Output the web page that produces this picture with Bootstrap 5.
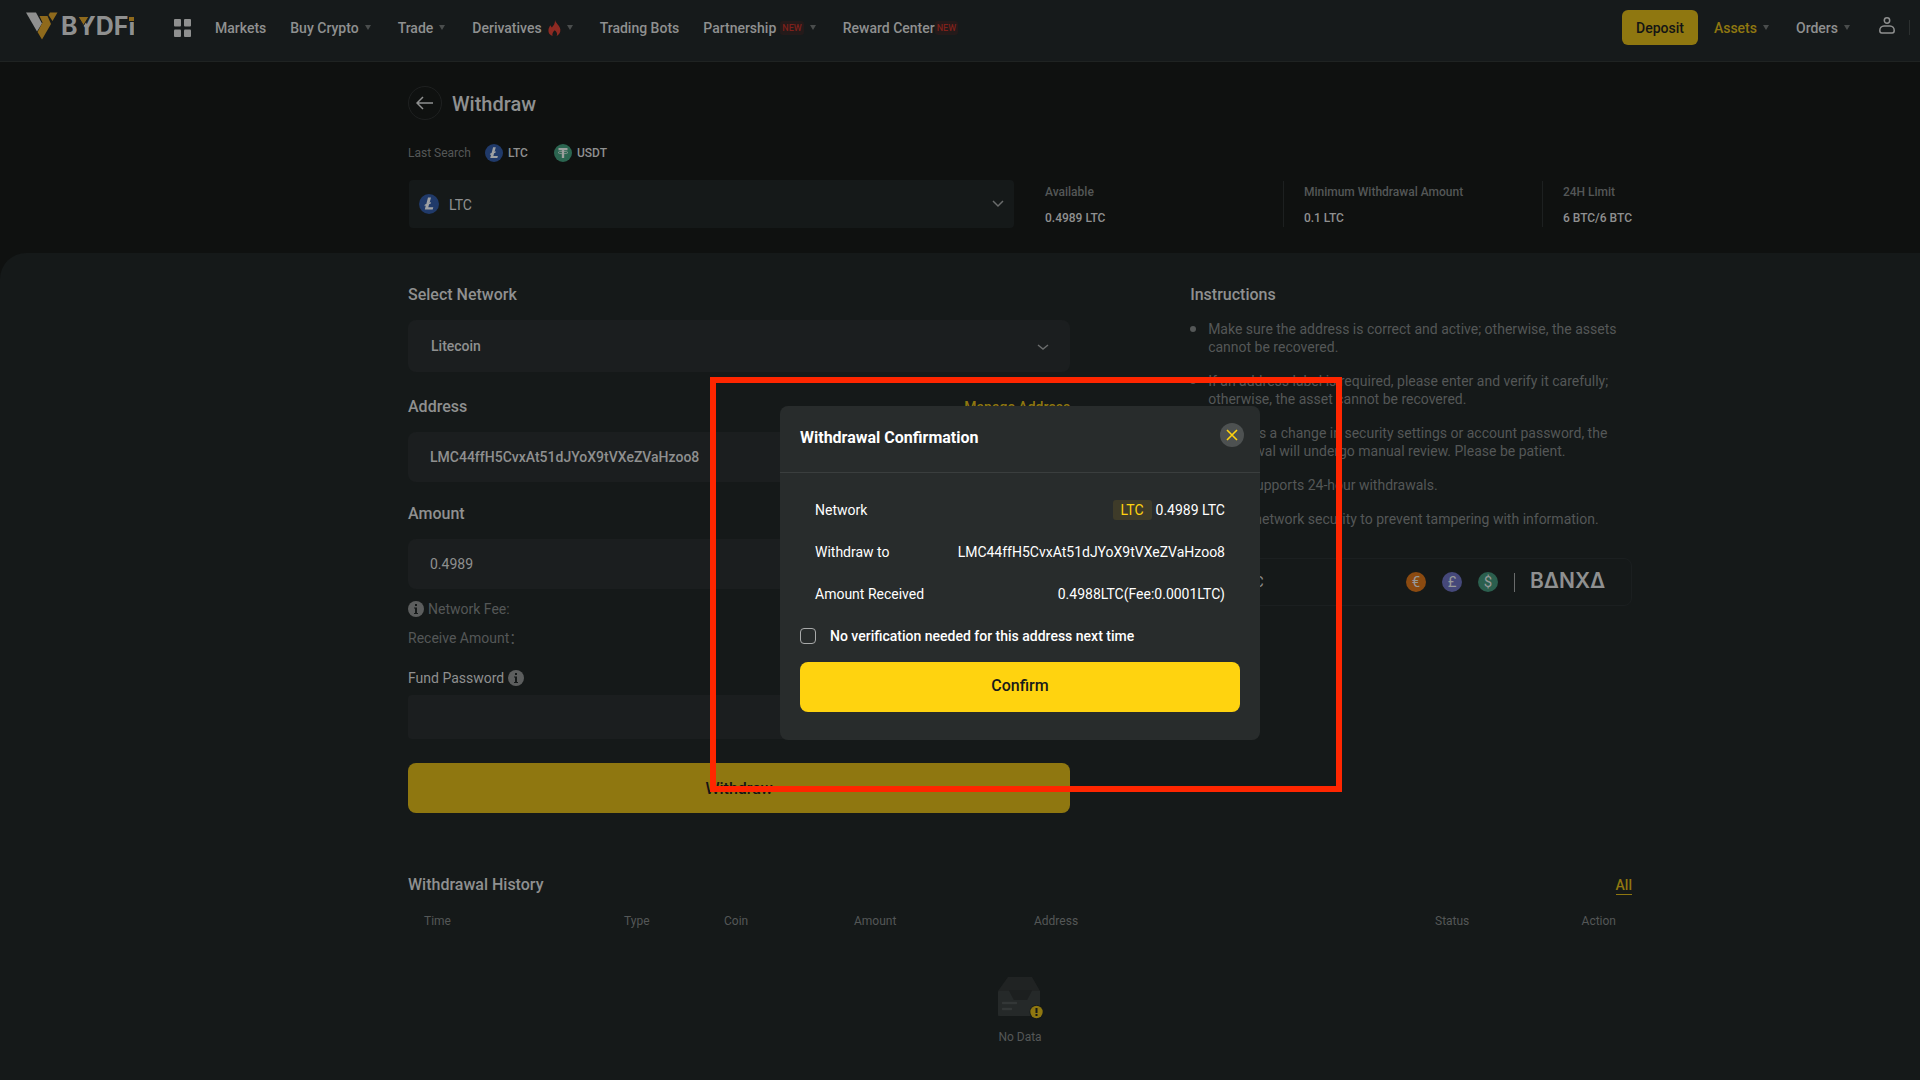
<!DOCTYPE html>
<html lang="en">
<head>
<meta charset="utf-8">
<meta name="viewport" content="width=device-width, initial-scale=1">
<title>Withdraw | BYDFi</title>
<link href="https://cdn.jsdelivr.net/npm/bootstrap@5.3.0/dist/css/bootstrap.min.css" rel="stylesheet">
<style>
:root{--page:#0f1110;--panel:#151919;--field:#1b1e1f;--fg:#8f9090;--dim:#545757;--gold:#8f7710;--bright:#ffd30f}
body{font-family:Roboto,"Liberation Sans",sans-serif;font-size:14px;line-height:20px;background:var(--page);color:var(--fg);min-height:100vh}
a{color:inherit;text-decoration:none}
.fs-s{font-size:12px;line-height:18px}
.txt-dim{color:var(--dim)}
.txt-gold{color:var(--gold)}
.topbar{background:#161a1b;border-bottom:1px solid #1f2322;height:62px;padding:0 10px 6px 26px}
.brand{margin-right:40px;padding-bottom:4px}
.brand text{font-family:Inter,Roboto,sans-serif;font-weight:700;font-size:25px;fill:var(--fg)}
.mainnav{gap:24px;margin-left:24px}
.mainnav a,.sidenav a{font-weight:500}
.tri{width:0;height:0;border:3px solid transparent;border-top:5px solid #4a4d4d;border-bottom:0;margin:0 3px 0 6px}
.newtag{font-size:9px;line-height:14px;color:#7e211b;background:#241a1a;border-radius:3px;padding:0 2px}
.btn-dep{background:var(--gold);color:#131415;border-radius:6px;font-weight:500;font-size:14px;line-height:20px;padding:7px 14px;height:35px;border:0}
.usericon{margin-left:26px}
.wrap{padding-left:21.25%;padding-right:15%}
.backbtn{width:34px;height:34px;border:1px solid #1e2020;border-radius:50%;background:none;color:var(--fg);padding:0}
.pagetitle{font-size:20px;line-height:28px;font-weight:500;padding:2px 0 0 10px}
.lastsearch{margin-top:24px;gap:14px}
.lastsearch a{gap:5px;margin-right:12px}
.coinrow{margin-top:18px;margin-bottom:25px}
.coinbox{width:605px;height:48px;background:#151919;border-radius:4px;margin-left:1px}
.coinbox svg.coin{position:absolute;left:10px;top:14px}
.coinbox select{padding:2px 0 0 40px}
.bare{background:none;border:0;outline:0;color:var(--fg);width:100%;height:100%;appearance:none;font:inherit}
.chev{position:absolute;pointer-events:none;color:#6a6c6c}
.coinbox .chev{right:10px;top:20px}
.stat{font-weight:500;line-height:18px;font-size:12px;padding-top:2px}
.stat+.stat{border-left:1px solid #1d2020;padding-left:20px}
.stat dd{margin:8px 0 0}
.stat dt{font-weight:500;color:var(--dim)}
.stat.first{padding-left:31px}
.sheet{background:var(--panel);border-top-left-radius:26px;padding-top:30px;min-height:827px}
.formcol{flex:0 0 54.1%}
.infocol{flex:0 0 36.1%}
.head16{font-size:16px;line-height:24px;font-weight:500}
.fieldbox{background:var(--field);border-radius:8px;height:50px;margin-top:13px;padding:0 20px;position:relative}
.fieldbox .bare{font-weight:500}
.fieldbox.tall{height:52px;padding:0 23px}
.fieldbox.short{height:44px;margin-top:7px;border-radius:4px}
.fieldbox .chev{right:21px;top:24px}
.gapA{margin-top:23px}.gapB{margin-top:20px}.gapC{margin-top:10px}.gapD{margin-top:9px}
.bigbtn{display:block;width:100%;height:50px;border:0;border-radius:8px;font-size:16px;line-height:24px;font-weight:500;color:#131415;background:var(--gold);padding:2px 0 0}
.tips{list-style:none;padding:0;margin:13px 0 0;line-height:18px;color:var(--dim)}
.tips li{padding-left:18px;position:relative;margin-bottom:16px}
.tips li::before{content:"";position:absolute;left:0;top:6px;width:6px;height:6px;border-radius:50%;background:var(--dim)}
.buybox{border:1px solid #1b1f20;border-radius:8px;height:48px;margin-top:30px;padding:0 20px 0 23px}
.vbar{width:1px;height:19px;background:#6a6c6c;margin:0 16px}
.banxa text{font-family:Inter,Roboto,sans-serif;font-weight:600;font-size:21px;fill:var(--fg)}
.history{margin-top:60px}
.allink{border-bottom:1px solid var(--gold);line-height:18px;font-weight:500;color:var(--gold)}
.hist{width:100%;table-layout:fixed;margin-top:15px}
.hist th{font-weight:400;padding:0 16px}
.empty{margin-top:47px;line-height:18px}
.empty svg{margin-bottom:9px}
.modal{padding-left:6.25%;color:#fff;pointer-events:none}
.modal-dialog{max-width:480px;margin:406px auto 0}
.modal-content{background:#282c2c;border:0;border-radius:8px;height:334px;color:#fff}
.mhead{border-bottom:1px solid #3a3e3e;height:67px;padding:0 16px 8px 20px}
.mhead h2{font-size:16px;line-height:24px;font-weight:700;margin:6px 0 0}
.mclose{width:24px;height:24px;border:0;border-radius:50%;background:#4d5151;padding:0;line-height:0}
.mrows{padding:27px 35px 0;margin:0}
.mrows>div{margin-bottom:22px}
.mrows dt{font-weight:400}
.ltctag{color:var(--bright);background:#3e3b29;border-radius:3px;padding:0 8px;margin-right:4px}
.mcheck{padding:0 20px;margin:0 0 16px}
.mcheck input{appearance:none;width:16px;height:16px;border:1px solid #a8aaaa;border-radius:4px;margin:0 14px 0 0}
.mcheck label{font-weight:500}
.modal .bigbtn{background:var(--bright);width:auto;margin:0 20px;color:#181a1a;padding:0 0 2px}
.callout{position:absolute;left:50%;top:377px;width:632px;height:415px;margin-left:-250px;border:6px solid #ff2600;z-index:1060;pointer-events:none}
</style>
</head>
<body>
<header class="topbar d-flex align-items-center">
  <a class="brand" href="#" aria-label="BYDFi">
    <svg class="d-block" width="108" height="28" viewBox="26 12 108 28">
      <path fill="#8f9090" d="M26 12.500h10l6 11-5 8z"/>
      <path fill="#8f6a1c" d="M39.500 16h8l3.500 8-9 15.500-4.500-7.500 5-9.500zM50 12.500h7.500l-5 8.500-4-6z"/>
      <text x="61" y="35">BYDFi</text>
      <path fill="#8f6a1c" stroke="#161a1b" stroke-width="1" d="M78 16.500h11l-5.500 9z"/>
      <path fill="#161a1b" d="M128 15h6v7h-6z"/>
      <path fill="#8f6a1c" d="M129 17h5v4h-5z"/>
    </svg>
  </a>
  <svg width="17" height="18" viewBox="0 0 17 18" fill="#8f9090"><rect width="7" height="7.500" rx="1"/><rect x="10" width="7" height="7.500" rx="1"/><rect y="10.500" width="7" height="7.500" rx="1"/><rect x="10" y="10.500" width="7" height="7.500" rx="1"/></svg>
  <nav class="mainnav d-flex align-items-center">
    <a href="#">Markets</a>
    <a href="#" class="d-flex align-items-center">Buy Crypto<span class="tri"></span></a>
    <a href="#" class="d-flex align-items-center">Trade<span class="tri"></span></a>
    <a href="#" class="d-flex align-items-center">Derivatives
      <svg style="margin-left:6px" width="13" height="16" viewBox="0 0 12 15"><path fill="#8e2a22" d="M6.500 0C7 3 11 5 11.500 9c.3 3-1.500 5.200-3.500 6 1-2 .2-4-1.800-5.500C4.500 11 3.500 13 4.200 15 1.500 14 0 12 .3 9.300.5 7.500 1.500 6.500 2 5l1.500 2C5.500 5 6.500 3 6.500 0z"/></svg>
      <span class="tri"></span></a>
    <a href="#">Trading Bots</a>
    <a href="#" class="d-flex align-items-center">Partnership<span class="newtag ms-1">NEW</span><span class="tri"></span></a>
    <a href="#" class="d-flex align-items-center">Reward Center<span class="newtag">NEW</span></a>
  </nav>
  <div class="sidenav d-flex align-items-center ms-auto">
    <button type="button" class="btn-dep me-3">Deposit</button>
    <a href="#" class="d-flex align-items-center txt-gold me-4">Assets<span class="tri"></span></a>
    <a href="#" class="d-flex align-items-center">Orders<span class="tri"></span></a>
    <a href="#" aria-label="Account" class="usericon"><svg class="d-block mb-1" width="16" height="17" viewBox="0 0 16 17" fill="none" stroke="#8f9090" stroke-width="1.500"><circle cx="8" cy="3.500" r="2.700"/><path d="M5 9h6c2.500 0 4.200 2 4.200 4.500 0 2-.5 2.500-2 2.500H2.800c-1.500 0-2-.5-2-2.500C.8 11 2.500 9 5 9z"/></svg></a>
    <span style="width:1px;height:15px;background:#2c3030;margin-left:14px"></span>
  </div>
</header>

<section class="wrap pt-4">
  <div class="d-flex align-items-center">
    <button type="button" class="backbtn d-flex align-items-center justify-content-center" aria-label="Back"><svg width="18" height="14" viewBox="0 0 18 14" fill="none" stroke="currentColor" stroke-width="1.500"><path d="M17 7H1M7 1 1 7l6 6"/></svg></button>
    <h1 class="pagetitle m-0">Withdraw</h1>
  </div>
  <div class="lastsearch d-flex align-items-center fs-s">
    <span class="txt-dim">Last Search</span>
    <a href="#" class="d-flex align-items-center fw-medium"><svg width="18" height="18" viewBox="0 0 20 20"><use href="#ltc"/></svg><span style="font-weight:500">LTC</span></a>
    <a href="#" class="d-flex align-items-center fw-medium"><svg width="18" height="18" viewBox="0 0 20 20"><circle cx="10" cy="10" r="10" fill="#2b6550"/><path fill="#9c9f9e" d="M5 4.500h10v2.500h-3.700V15.500H8.700V7H5z"/><ellipse cx="10" cy="9.500" rx="5.500" ry="1.300" fill="none" stroke="#9c9f9e" stroke-width=".8"/></svg><span style="font-weight:500">USDT</span></a>
  </div>
  <div class="coinrow d-flex align-items-center">
    <div class="coinbox position-relative flex-shrink-0">
      <svg class="coin" width="20" height="20" viewBox="0 0 20 20"><g id="ltc"><circle cx="10" cy="10" r="10" fill="#203a6a"/><path fill="#9fa1a3" d="M9 3.500h3L10.600 8.700l1.500-.6-.5 1.600-1.500.6-.8 2.900h5l-.6 2.300H5.800l1-3.900-1.400.6.5-1.600 1.400-.6z"/></g></svg>
      <select class="bare" aria-label="Coin"><option>LTC</option></select>
      <svg class="chev" width="12" height="8" viewBox="0 0 12 8" fill="none" stroke="currentColor" stroke-width="1.500"><path d="m1 1 5 5 5-5"/></svg>
    </div>
    <dl class="stat first m-0 flex-grow-1"><dt>Available</dt><dd>0.4989 LTC</dd></dl>
    <dl class="stat m-0" style="width:259px"><dt>Minimum Withdrawal Amount</dt><dd>0.1 LTC</dd></dl>
    <dl class="stat m-0"><dt>24H Limit</dt><dd>6 BTC/6 BTC</dd></dl>
  </div>
</section>

<main class="sheet wrap">
  <div class="d-flex justify-content-between">
    <form class="formcol">
      <label class="head16 d-block" for="net">Select Network</label>
      <div class="fieldbox tall"><select class="bare" id="net"><option>Litecoin</option></select>
        <svg class="chev" width="12" height="7" viewBox="0 0 12 7" fill="none" stroke="currentColor" stroke-width="1.500"><path d="m1 1 5 4 5-4"/></svg></div>
      <div class="d-flex justify-content-between align-items-center gapA"><label class="head16" for="addr">Address</label><a href="#" class="txt-gold" style="font-weight:500">Manage Address</a></div>
      <div class="fieldbox"><input class="bare" id="addr" value="LMC44ffH5CvxAt51dJYoX9tVXeZVaHzoo8"></div>
      <label class="head16 d-block gapB" for="amt">Amount</label>
      <div class="fieldbox"><input class="bare fw-normal" id="amt" value="0.4989"></div>
      <div class="d-flex align-items-center txt-dim gapC"><svg class="me-1" width="16" height="16" viewBox="0 0 16 16"><g id="inf"><circle cx="8" cy="8" r="8" fill="#5c5e5e"/><path fill="#151919" d="M7 3h2v2H7zM6 6.500h3V12h1v1H6v-1h1V7.500H6z"/></g></svg>Network Fee:</div>
      <div class="txt-dim gapD" style="font-family:Roboto,'Noto Sans CJK SC',sans-serif">Receive Amount：</div>
      <div class="d-flex align-items-center gapB"><label for="fund">Fund Password</label><svg class="ms-1" width="16" height="16" viewBox="0 0 16 16"><use href="#inf"/></svg></div>
      <div class="fieldbox short"><input class="bare" id="fund" type="password"></div>
      <button type="button" class="bigbtn mt-4">Withdraw</button>
    </form>
    <aside class="infocol">
      <h2 class="head16 m-0">Instructions</h2>
      <ul class="tips">
        <li>Make sure the address is correct and active; otherwise, the assets cannot be recovered.</li>
        <li>If an address label is required, please enter and verify it carefully; otherwise, the asset cannot be recovered.</li>
        <li>If there is a change in security settings or account password, the withdrawal will undergo manual review. Please be patient.</li>
        <li>BYDFi supports 24-hour withdrawals.</li>
        <li>Ensure network security to prevent tampering with information.</li>
      </ul>
      <div class="buybox d-flex align-items-center">
        <span class="me-auto">Buy LTC</span>
        <svg width="92" height="20" viewBox="0 0 92 20" font-size="15" text-anchor="middle" fill="#979999"><circle cx="10" cy="10" r="10" fill="#8b4a10"/><text x="10" y="15">€</text><circle cx="46" cy="10" r="10" fill="#45487a"/><text x="46" y="15">£</text><circle cx="82" cy="10" r="10" fill="#2b5f4e"/><text x="82" y="15">$</text></svg>
        <span class="vbar"></span>
        <svg class="banxa mb-1" width="80" height="17" viewBox="0 0 80 17" aria-label="BANXA"><text x="-1" y="16">BΔNXΔ</text></svg>
      </div>
    </aside>
  </div>
  <div class="history d-flex justify-content-between align-items-center">
    <h2 class="head16 m-0">Withdrawal History</h2><a href="#" class="allink">All</a>
  </div>
  <table class="hist fs-s txt-dim">
    <colgroup><col style="width:200px"><col style="width:100px"><col style="width:130px"><col style="width:180px"><col><col style="width:106px"><col style="width:107px"></colgroup>
    <thead><tr><th>Time</th><th>Type</th><th>Coin</th><th>Amount</th><th>Address</th><th>Status</th><th class="text-end">Action</th></tr></thead>
  </table>
  <div class="empty fs-s text-center">
    <svg class="d-block mx-auto" width="46" height="42" viewBox="-1 0 46 42"><path fill="#202323" d="M10 0h24l8 14v25H0V14z"/><path fill="#252929" d="M1 14h10l5 9h13l5-9h8v23a2 2 0 0 1-2 2H2a2 2 0 0 1-2-2V15z"/><path fill="#1c1f1f" d="M11 13h23l-5 10H16z"/><path stroke="#333737" stroke-width="2.500" stroke-linecap="round" d="M5 26h13M5 32h8"/><circle cx="38.500" cy="35" r="7" fill="#151919"/><circle cx="38.500" cy="35" r="6.200" fill="#8f7710"/><path stroke="#151919" stroke-width="2" d="M38.500 31v5M38.500 37v2"/></svg>
    <span class="txt-dim">No Data</span>
  </div>
</main>

<div class="modal d-block position-absolute overflow-hidden" role="dialog" aria-labelledby="mt">
  <div class="modal-dialog"><div class="modal-content">
    <div class="mhead d-flex justify-content-between align-items-center flex-shrink-0"><h2 id="mt">Withdrawal Confirmation</h2>
      <button type="button" class="mclose" aria-label="Close"><svg width="12" height="12" viewBox="0 0 12 12" stroke="#ffd30f" stroke-width="1.600"><path d="m1 1 10 10M11 1 1 11"/></svg></button></div>
    <dl class="mrows">
      <div class="d-flex justify-content-between"><dt>Network</dt><dd class="m-0 d-flex"><span class="ltctag">LTC</span>0.4989 LTC</dd></div>
      <div class="d-flex justify-content-between"><dt>Withdraw to</dt><dd class="m-0">LMC44ffH5CvxAt51dJYoX9tVXeZVaHzoo8</dd></div>
      <div class="d-flex justify-content-between"><dt>Amount Received</dt><dd class="m-0">0.4988LTC(Fee:0.0001LTC)</dd></div>
    </dl>
    <div class="mcheck d-flex align-items-center"><input type="checkbox" id="nov"><label for="nov">No verification needed for this address next time</label></div>
    <button type="button" class="bigbtn">Confirm</button>
  </div></div>
</div>
<div class="callout"></div>
<script src="https://cdn.jsdelivr.net/npm/bootstrap@5.3.0/dist/js/bootstrap.bundle.min.js"></script>
</body>
</html>
